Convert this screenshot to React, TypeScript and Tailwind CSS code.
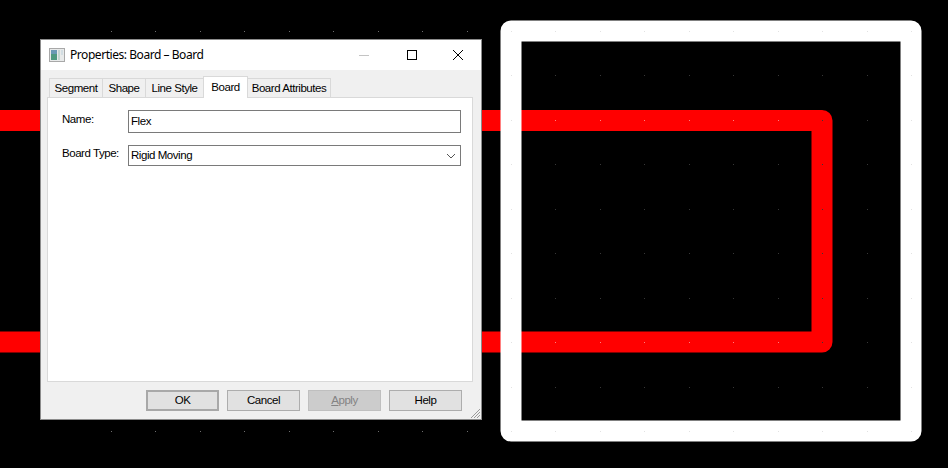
const TABS = [
  { label: "Segment", w: "w-[54px]" },
  { label: "Shape", w: "w-[44px]" },
  { label: "Line Style", w: "w-[59px]" },
];

const STEP = 400 / 9;
const DOT_XS = Array.from({ length: 19 }, (_, i) => Math.round(111 + i * STEP));
const DOT_YS = Array.from({ length: 10 }, (_, i) => Math.round(31 + i * STEP));

function dotColor(x: number, y: number) {
  if ((x > 500 && x < 522) || x > 900) return "#e2e2e2";
  if (y === 31 || y === 431) return x < 500 ? "#6e6e6e" : "#e2e2e2";
  if (y === 120 || y === 342) return x < 822 ? "#ff8080" : "#383838";
  return "#383838";
}

function Board() {
  return (
    <svg width="948" height="468" className="block">
      <path
        d="M0 120.5H822V342H0"
        fill="none"
        stroke="#ff0000"
        strokeWidth="21"
        strokeLinejoin="round"
      />
      <path
        d="M511 31H911V431H511Z"
        fill="none"
        stroke="#ffffff"
        strokeWidth="21"
        strokeLinejoin="round"
      />
      {DOT_XS.map((x) =>
        DOT_YS.map((y) => (
          <rect key={`${x}-${y}`} x={x} y={y} width="1" height="1" fill={dotColor(x, y)} />
        )),
      )}
    </svg>
  );
}

function AppIcon() {
  return (
    <svg width="16" height="14" viewBox="0 0 16 14" className="shrink-0">
      <rect x="0.5" y="0.5" width="15" height="13" fill="#e8eaea" stroke="#a8a8a8" />
      <rect x="2" y="2" width="6" height="10" fill="#4f9a80" />
      <rect x="2" y="2" width="6" height="4" fill="#6a9ab4" />
      <rect x="9" y="2" width="2" height="10" fill="#c4d6d0" />
      <rect x="12" y="2" width="2" height="5" fill="#d2dde2" />
    </svg>
  );
}

function DialogButton({
  label,
  primary,
  disabled,
}: {
  label: React.ReactNode;
  primary?: boolean;
  disabled?: boolean;
}) {
  return (
    <div
      className={`flex h-[21px] w-[73px] items-center justify-center ${
        primary
          ? "border-2 border-[#a8a8a8] bg-[#e1e1e1] text-black"
          : disabled
            ? "border border-[#bfbfbf] bg-[#cccccc] text-[#838383]"
            : "border border-[#adadad] bg-[#e1e1e1] text-black"
      }`}
    >
      {label}
    </div>
  );
}

export default function App() {
  return (
    <div className="relative h-[468px] w-[948px] overflow-hidden bg-black font-['Liberation_Sans',sans-serif] text-[11.5px] tracking-[-0.45px]">
      <Board />

      {/* dialog floats over the board drawing */}
      <div className="absolute left-[40px] top-[39px] flex h-[381px] w-[442px] flex-col border border-[#8c8c8c] bg-[#f0f0f0]">
        <div className="flex h-[30px] shrink-0 items-center bg-white pl-[8px]">
          <AppIcon />
          <span className="ml-[5px] font-['Noto_Sans',sans-serif] text-[12px] tracking-[-0.45px] text-black">
            Properties: Board – Board
          </span>
          <div className="ml-auto flex items-center">
            <div className="mr-[38px] h-px w-[10px] bg-[#c4c4c4]" />
            <div className="mr-[35px] h-[10px] w-[10px] border border-black" />
            <svg width="12" height="12" viewBox="0 0 12 12" className="mr-[17px]">
              <path d="M1 1L11 11M11 1L1 11" stroke="#000" strokeWidth="1" fill="none" />
            </svg>
          </div>
        </div>

        <div className="flex h-[27px] shrink-0 items-end pl-[8px] text-black">
          {TABS.map((t) => (
            <div
              key={t.label}
              className={`-ml-px flex h-[19px] ${t.w} items-center justify-center whitespace-nowrap border border-b-0 border-[#d9d9d9] pt-[2px] first:ml-0`}
            >
              {t.label}
            </div>
          ))}
          <div className="relative z-10 -ml-px mb-[-1px] flex h-[22px] w-[45px] items-start justify-center border border-b-0 border-[#d9d9d9] bg-white pt-[2px]">
            Board
          </div>
          <div className="-ml-px flex h-[19px] w-[84px] items-center justify-center whitespace-nowrap border border-b-0 border-[#d9d9d9] pt-[2px]">
            Board Attributes
          </div>
        </div>

        <div className="ml-[6px] mr-[8px] flex h-[285px] shrink-0 flex-col border border-[#d9d9d9] bg-white pl-[14px] pr-[11px] pt-[12px] text-black">
          <div className="flex items-start">
            <span className="w-[66px] whitespace-nowrap pt-px leading-[16px]">Name:</span>
            <div className="flex h-[23px] flex-1 items-center border border-[#7a7a7a] pl-[2px]">Flex</div>
          </div>
          <div className="mt-[12px] flex items-start">
            <span className="w-[66px] whitespace-nowrap leading-[16px]">Board Type:</span>
            <div className="flex h-[21px] flex-1 items-center justify-between border border-[#7a7a7a] pl-[2px] pr-[4px]">
              <span>Rigid Moving</span>
              <svg width="10" height="6" viewBox="0 0 10 6">
                <path d="M1 1L5 5L9 1" stroke="#555" strokeWidth="1" fill="none" />
              </svg>
            </div>
          </div>
        </div>

        <div className="mt-[8px] flex justify-end gap-[8px] pr-[19px]">
          <DialogButton label="OK" primary />
          <DialogButton label="Cancel" />
          <DialogButton
            disabled
            label={
              <>
                <span className="underline">A</span>pply
              </>
            }
          />
          <DialogButton label="Help" />
        </div>

        <svg width="12" height="12" viewBox="0 0 12 12" className="absolute bottom-0 right-0">
          <path d="M11 2L2 11M11 5L5 11M11 8L8 11" stroke="#9a9a9a" strokeWidth="1" fill="none" />
        </svg>
      </div>
    </div>
  );
}
